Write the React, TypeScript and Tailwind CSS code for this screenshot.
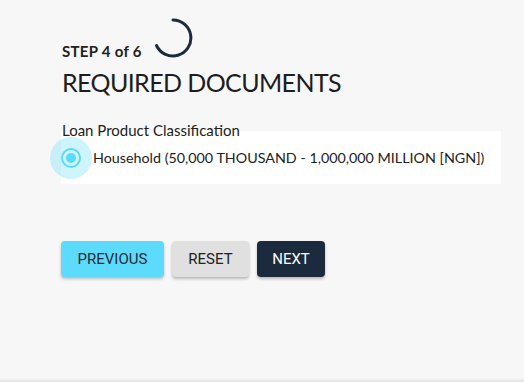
import React from "react";

export default function App() {
  return (
    <div className="w-[524px] h-[382px] bg-[#f7f7f7] relative overflow-hidden" style={{ fontFamily: "Lato, 'Open Sans', sans-serif" }}>
      <div className="pl-[61px] pt-[18px] flex flex-col">
        <div className="flex items-end gap-[11px] h-[40px]">
          <span className="text-[15px] font-bold text-[#222] leading-[15px] -mb-[1px] pl-[1px] tracking-[0.3px]">STEP 4 of 6</span>
          <svg width="40" height="40" viewBox="0 0 40 40" className="block">
            <path d="M20 2 A18 18 0 1 1 3.5 27.5" fill="none" stroke="#1c2b3c" strokeWidth="3" strokeLinecap="round" />
          </svg>
        </div>
        <h1 className="text-[25px] leading-[30px] mt-[9px] pl-[1px] text-[#1d1d1d] font-normal tracking-[-0.6px]">REQUIRED DOCUMENTS</h1>
        <div className="text-[15px] leading-[18px] mt-[24px] pl-[1px] text-[#222] relative z-10">Loan Product Classification</div>
        <div className="w-[440px] h-[53px] bg-white -mt-[8px] flex items-center">
          <div className="relative w-[20px] h-[20px] shrink-0">
            <div className="absolute -left-[11px] -top-[11px] w-[42px] h-[42px] rounded-full bg-[#5dd9fc]/30" />
            <div className="absolute inset-0 rounded-full border-2 border-[#5dd9fc] flex items-center justify-center">
              <div className="w-[10px] h-[10px] rounded-full bg-[#5dd9fc]" />
            </div>
          </div>
          <span className="ml-[12px] text-[14.3px] text-[#222]">Household (50,000 THOUSAND - 1,000,000 MILLION [NGN])</span>
        </div>
        <div className="flex gap-[8px] mt-[57px]" style={{ fontFamily: "Roboto, sans-serif" }}>
          <button className="h-[36px] w-[103px] rounded-[4px] bg-[#5ddbfc] text-[#1d2b3a] text-[15px] font-normal shadow-[0_2px_3px_rgba(0,0,0,0.25)]">PREVIOUS</button>
          <button className="h-[36px] w-[77px] rounded-[4px] bg-[#e0e0e0] text-[#222] text-[15px] font-normal shadow-[0_2px_3px_rgba(0,0,0,0.25)]">RESET</button>
          <button className="h-[36px] w-[68px] rounded-[4px] bg-[#1b2a3c] text-white text-[15px] font-normal shadow-[0_2px_3px_rgba(0,0,0,0.25)]">NEXT</button>
        </div>
      </div>
      <div className="absolute left-0 right-0 bottom-0 h-[4px] bg-gradient-to-b from-[#f7f7f7] to-[#e2e2e2]" />
    </div>
  );
}
